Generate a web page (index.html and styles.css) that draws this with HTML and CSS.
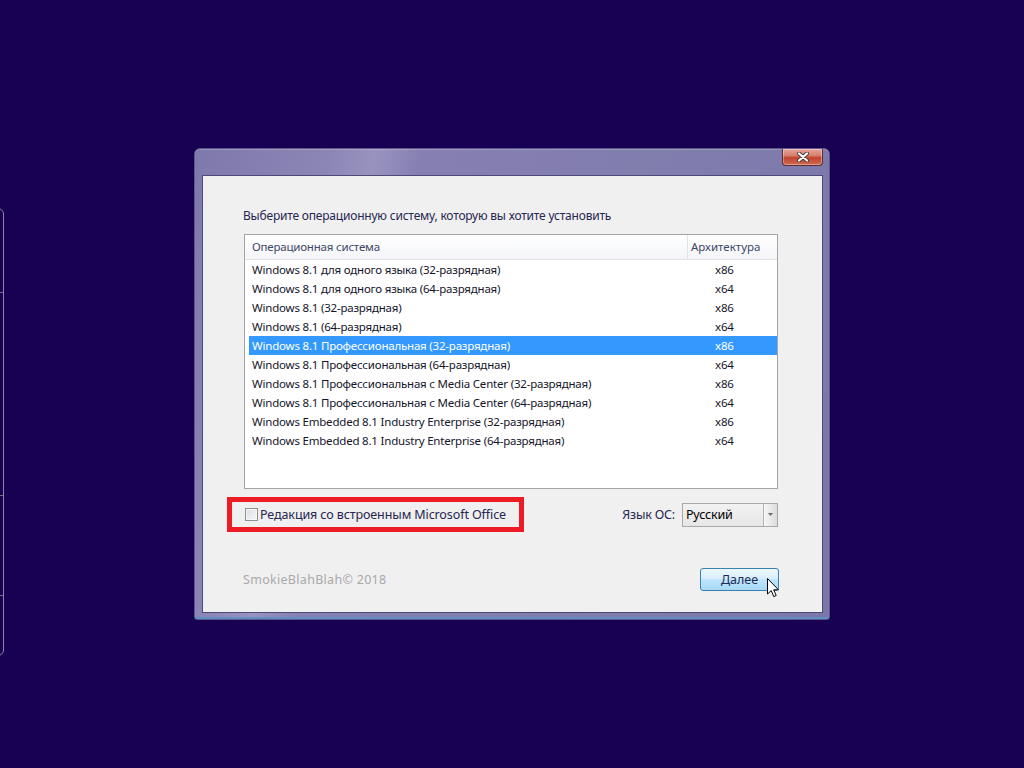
FILE: index.html
```html
<!DOCTYPE html>
<html lang="ru">
  <head>
    <meta charset="UTF-8" />
    <meta name="viewport" content="width=device-width, initial-scale=1.0" />
    <title>Выбор операционной системы</title>
    <link rel="stylesheet" href="styles.css">
  </head>
  <body>
    <div class="edge-panel">
      <span class="tick tick-1"></span>
      <span class="tick tick-2"></span>
      <span class="tick tick-3"></span>
    </div>

    <div class="window">
      <div class="titlebar">
        <button class="close-btn" type="button" aria-label="Закрыть">
          <svg width="14" height="10" viewBox="0 0 14 10">
            <path d="M3 1.5 L11 8.5 M11 1.5 L3 8.5" stroke="#4a3a3a" stroke-width="4" stroke-linecap="round" />
            <path d="M3 1.5 L11 8.5 M11 1.5 L3 8.5" stroke="#ffffff" stroke-width="2.2" stroke-linecap="round" />
          </svg>
        </button>
      </div>

      <div class="client">
        <p class="prompt">Выберите операционную систему, которую вы хотите установить</p>

        <div class="os-list">
          <div class="list-header">
            <div class="col-name">Операционная система</div>
            <div class="col-arch">Архитектура</div>
          </div>
          <div class="row"><span>Windows 8.1 для одного языка (32-разрядная)</span><span>x86</span></div>
          <div class="row"><span>Windows 8.1 для одного языка (64-разрядная)</span><span>x64</span></div>
          <div class="row"><span>Windows 8.1 (32-разрядная)</span><span>x86</span></div>
          <div class="row"><span>Windows 8.1 (64-разрядная)</span><span>x64</span></div>
          <div class="row selected"><span>Windows 8.1 Профессиональная (32-разрядная)</span><span>x86</span></div>
          <div class="row"><span>Windows 8.1 Профессиональная (64-разрядная)</span><span>x64</span></div>
          <div class="row"><span>Windows 8.1 Профессиональная с Media Center (32-разрядная)</span><span>x86</span></div>
          <div class="row"><span>Windows 8.1 Профессиональная с Media Center (64-разрядная)</span><span>x64</span></div>
          <div class="row"><span>Windows Embedded 8.1 Industry Enterprise (32-разрядная)</span><span>x86</span></div>
          <div class="row"><span>Windows Embedded 8.1 Industry Enterprise (64-разрядная)</span><span>x64</span></div>
        </div>

        <div class="options">
          <label class="office-option">
            <span class="checkbox"></span>
            Редакция со встроенным Microsoft Office
          </label>
          <div class="lang">
            <span>Язык ОС:</span>
            <div class="select">
              <span class="select-value">Русский</span>
              <span class="select-arrow">
                <svg width="5" height="3" viewBox="0 0 5 3"><path d="M0 0 H5 L2.5 3 Z" fill="#6a6a6a" /></svg>
              </span>
            </div>
          </div>
        </div>

        <div class="footer">
          <span class="copyright">SmokieBlahBlah© 2018</span>
          <button class="next-btn" type="button">
            Далее
            <svg class="cursor" width="13" height="20" viewBox="0 0 13 20">
              <path d="M0.5 0.5 V16 L4.2 12.6 L6.8 18.6 L9.2 17.5 L6.7 11.8 L11.5 11.8 Z" fill="#ffffff" stroke="#000000" stroke-width="1" stroke-linejoin="miter" />
            </svg>
          </button>
        </div>
      </div>
    </div>
  </body>
</html>
```

FILE: styles.css
```css
html,
body {
  margin: 0;
  height: 100%;
}

body {
  background-color: #180052;
  font-family: "Noto Sans", "Open Sans", sans-serif;
  font-size: 11.5px;
  letter-spacing: -0.2px;
  display: flex;
  align-items: center;
  justify-content: center;
  position: relative;
  overflow: hidden;
}

/* bit of another window peeking in from the left */
.edge-panel {
  position: absolute;
  left: -20px;
  top: 208px;
  width: 22px;
  height: 446px;
  border: 1px solid #8a879c;
  border-radius: 6px;
}

.tick {
  position: absolute;
  right: 0;
  width: 4px;
  border-top: 1px solid #6e6b86;
}

.tick-1 { top: 83px; }
.tick-2 { top: 286px; }
.tick-3 { top: 386px; }

.window {
  width: 636px;
  height: 472px;
  box-sizing: border-box;
  padding: 0 6px 6px 7px;
  display: flex;
  flex-direction: column;
  border: 1px solid #5b578a;
  border-radius: 6px 6px 3px 3px;
  background: linear-gradient(105deg, #7e79ab 0%, #8b86b5 18%, #9893bf 24%, #8580b1 30%, #817dad 60%, #7b77a8 100%);
  box-shadow: inset 0 1px 0 rgba(255, 255, 255, 0.2), inset 0 -2px 0 #5f8fc4;
}

.titlebar {
  height: 26px;
  display: flex;
  justify-content: flex-end;
  align-items: flex-start;
}

.close-btn {
  width: 41px;
  height: 17px;
  padding: 0;
  display: flex;
  align-items: center;
  justify-content: center;
  border: 1px solid #5a2e34;
  border-top: none;
  border-radius: 0 0 4px 4px;
  background: linear-gradient(#e6a398 0%, #d8806f 40%, #c2432c 55%, #cf6a52 100%);
  box-shadow: inset 0 0 0 1px rgba(255, 255, 255, 0.35);
}

.client {
  flex: 1;
  display: flex;
  flex-direction: column;
  background-color: #f0f0f0;
  border: 1px solid #4d4a7a;
  padding: 0 44px 21px 41px;
}

.prompt {
  margin: 32px 0 10px -1px;
  line-height: 16px;
  font-size: 12px;
  color: #262650;
}

.os-list {
  height: 255px;
  box-sizing: border-box;
  width: 534px;
  background-color: #fff;
  border: 1px solid #a3a3a8;
}

.list-header {
  display: flex;
  height: 25px;
  box-sizing: border-box;
  border-bottom: 1px solid #e3e3e6;
  background: linear-gradient(#ffffff, #f4f5f8);
  color: #3d4768;
  line-height: 24px;
}

.col-name {
  width: 442px;
  padding-left: 7px;
  box-sizing: border-box;
}

.col-arch {
  flex: 1;
  border-left: 1px solid #e3e3e6;
  padding-left: 3px;
  letter-spacing: 0;
}

.row {
  display: grid;
  grid-template-columns: 466px 1fr;
  height: 19px;
  line-height: 19px;
  margin-left: 4px;
  color: #15152a;
}

.row span:first-child {
  padding-left: 3px;
}

.row.selected {
  background-color: #3399ff;
  color: #ffffff;
}

.options {
  margin-top: 8px;
  display: flex;
  align-items: center;
  justify-content: space-between;
}

.office-option {
  width: 297px;
  height: 35px;
  box-sizing: border-box;
  margin-left: -17px;
  padding-left: 13px;
  border: 5px solid #ed1c24;
  display: flex;
  align-items: center;
  gap: 2px;
  font-size: 12.5px;
  letter-spacing: -0.1px;
  color: #262650;
}

.checkbox {
  width: 11px;
  height: 11px;
  border: 1px solid #8e8f8f;
  background: linear-gradient(135deg, #dcdfe6, #f4f5f8);
  box-shadow: inset 0 0 0 1px #f7f7f7;
}

.lang {
  display: flex;
  align-items: center;
  gap: 7px;
  font-size: 12.5px;
  color: #262650;
}

.select {
  width: 96px;
  height: 24px;
  box-sizing: border-box;
  display: flex;
  border: 1px solid #a8a8a8;
  background: linear-gradient(#f2f2f2, #e6e6e6);
}

.select-value {
  flex: 1;
  padding-left: 3px;
  line-height: 22px;
  color: #000;
}

.select-arrow {
  width: 13px;
  display: flex;
  align-items: center;
  justify-content: center;
  border-left: 1px solid #b5b5b5;
  background: linear-gradient(90deg, #f6f6f6, #dcdcdc);
}

.footer {
  margin-top: auto;
  margin-right: -1px;
  display: flex;
  align-items: center;
  justify-content: space-between;
}

.copyright {
  font-size: 12.5px;
  color: #a9a9a9;
  letter-spacing: 0.3px;
  margin-left: -1px;
}

.next-btn {
  position: relative;
  width: 79px;
  height: 23px;
  padding: 0;
  border: 1px solid #3c7fb1;
  border-radius: 3px;
  background: linear-gradient(#ecf7fd 0%, #d9effc 45%, #bee6fd 50%, #a7d9f5 100%);
  font-family: inherit;
  font-size: 12.5px;
  color: #1e2a55;
}

.cursor {
  position: absolute;
  left: 66px;
  top: 9px;
}
```
